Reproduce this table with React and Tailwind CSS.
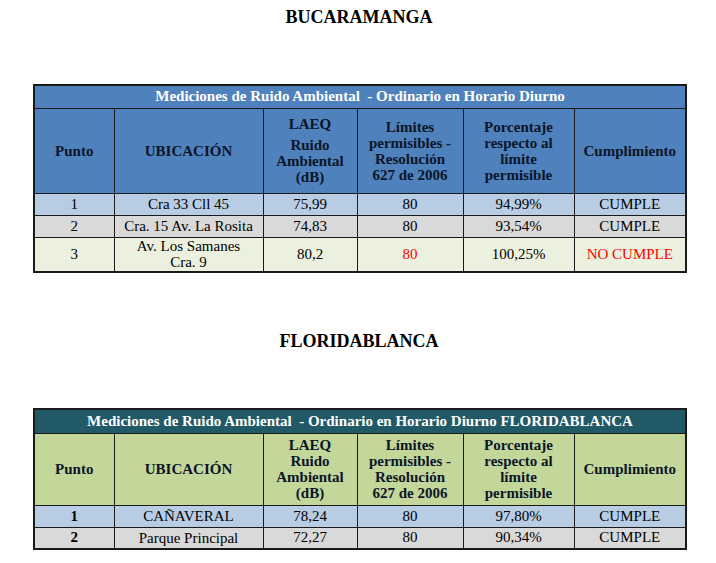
import React from "react";

// ─── Data ─────────────────────────────────────────────────────────────
const bucaramanga = [
  { punto: "1", ubicacion: "Cra 33 Cll 45", laeq: "75,99", limite: "80", pct: "94,99%", cumple: true, bg: "bg-[#b8cce4]", h: "h-[22px]" },
  { punto: "2", ubicacion: "Cra. 15 Av. La Rosita", laeq: "74,83", limite: "80", pct: "93,54%", cumple: true, bg: "bg-[#d9d9d9]", h: "h-[22px]" },
  { punto: "3", ubicacion: ["Av. Los Samanes", "Cra. 9"], laeq: "80,2", limite: "80", pct: "100,25%", cumple: false, bg: "bg-[#ebf1de]", h: "h-[35px]" },
];

const floridablanca = [
  { punto: "1", ubicacion: "CAÑAVERAL", laeq: "78,24", limite: "80", pct: "97,80%", cumple: true, bg: "bg-[#b8cce4]", h: "h-[22px]" },
  { punto: "2", ubicacion: "Parque Principal", laeq: "72,27", limite: "80", pct: "90,34%", cumple: true, bg: "bg-[#d9d9d9]", h: "h-[22px]" },
];
// ──────────────────────────────────────────────────────────────────────

const cell = "border border-[#1a1a1a] text-center align-middle p-0 font-['Liberation_Serif',serif]";

function Cols() {
  return (
    <colgroup>
      <col className="w-[80px]" />
      <col className="w-[149px]" />
      <col className="w-[94px]" />
      <col className="w-[106px]" />
      <col className="w-[111px]" />
      <col className="w-[112px]" />
    </colgroup>
  );
}

function Rows({ rows, boldPunto }) {
  return rows.map((r) => (
    <tr key={r.punto} className={`${r.bg} ${r.h} text-black`}>
      <td className={`${cell} text-[15px] leading-[17px] ${boldPunto ? "font-bold" : ""}`}>{r.punto}</td>
      <td className={`${cell} text-[15px] leading-[16px]`}>
        {Array.isArray(r.ubicacion) ? r.ubicacion.map((l) => <div key={l}>{l}</div>) : r.ubicacion}
      </td>
      <td className={`${cell} text-[15px] leading-[17px]`}>{r.laeq}</td>
      <td className={`${cell} text-[15px] leading-[17px] ${r.cumple ? "" : "text-[#ff0000]"}`}>{r.limite}</td>
      <td className={`${cell} text-[15px] leading-[17px]`}>{r.pct}</td>
      <td className={`${cell} text-[15px] leading-[17px] ${r.cumple ? "" : "text-[#ff0000]"}`}>{r.cumple ? "CUMPLE" : "NO CUMPLE"}</td>
    </tr>
  ));
}

function HeaderRow({ bg, h, laeqGap }) {
  const th = `${cell} font-bold text-[15px] leading-[16px] text-[#0b1526]`;
  return (
    <tr className={`${bg} ${h}`}>
      <th className={th}>Punto</th>
      <th className={th}>UBICACIÓN</th>
      <th className={th}>
        <div className={laeqGap ? "mb-[5px]" : ""}>LAEQ</div>
        <div>Ruido</div>
        <div>Ambiental</div>
        <div>(dB)</div>
      </th>
      <th className={th}>
        <div>Límites</div>
        <div>permisibles -</div>
        <div>Resolución</div>
        <div>627 de 2006</div>
      </th>
      <th className={th}>
        <div>Porcentaje</div>
        <div>respecto al</div>
        <div>límite</div>
        <div>permisible</div>
      </th>
      <th className={th}>Cumplimiento</th>
    </tr>
  );
}

export default function App() {
  return (
    <div className="w-[716px] h-[563px] bg-white overflow-hidden font-['Liberation_Serif',serif] pl-[33px]">
      <h1 className="w-[652px] text-center font-bold text-[18px] leading-[20px] text-black pt-[7px]">BUCARAMANGA</h1>

      <table className="mt-[57px] w-[652px] table-fixed border-collapse border-2 border-[#1a1a1a] font-['Liberation_Serif',serif]">
        <Cols />
        <thead>
          <tr className="bg-[#4f81bd] h-[23px]">
            <th colSpan={6} className={`${cell} font-bold text-[15px] leading-[17px] text-white`}>
              Mediciones de Ruido Ambiental &nbsp;- Ordinario en Horario Diurno
            </th>
          </tr>
          <HeaderRow bg="bg-[#4f81bd]" h="h-[85px]" laeqGap />
        </thead>
        <tbody>
          <Rows rows={bucaramanga} />
        </tbody>
      </table>

      <h2 className="w-[652px] text-center font-bold text-[18px] leading-[20px] text-black mt-[58px]">FLORIDABLANCA</h2>

      <table className="mt-[57px] w-[652px] table-fixed border-collapse border-2 border-[#1a1a1a] font-['Liberation_Serif',serif]">
        <Cols />
        <thead>
          <tr className="bg-[#215967] h-[24px]">
            <th colSpan={6} className={`${cell} font-bold text-[15px] leading-[17px] text-white`}>
              Mediciones de Ruido Ambiental &nbsp;- Ordinario en Horario Diurno FLORIDABLANCA
            </th>
          </tr>
          <HeaderRow bg="bg-[#c4d79b]" h="h-[72px]" />
        </thead>
        <tbody>
          <Rows rows={floridablanca} boldPunto />
        </tbody>
      </table>
    </div>
  );
}
